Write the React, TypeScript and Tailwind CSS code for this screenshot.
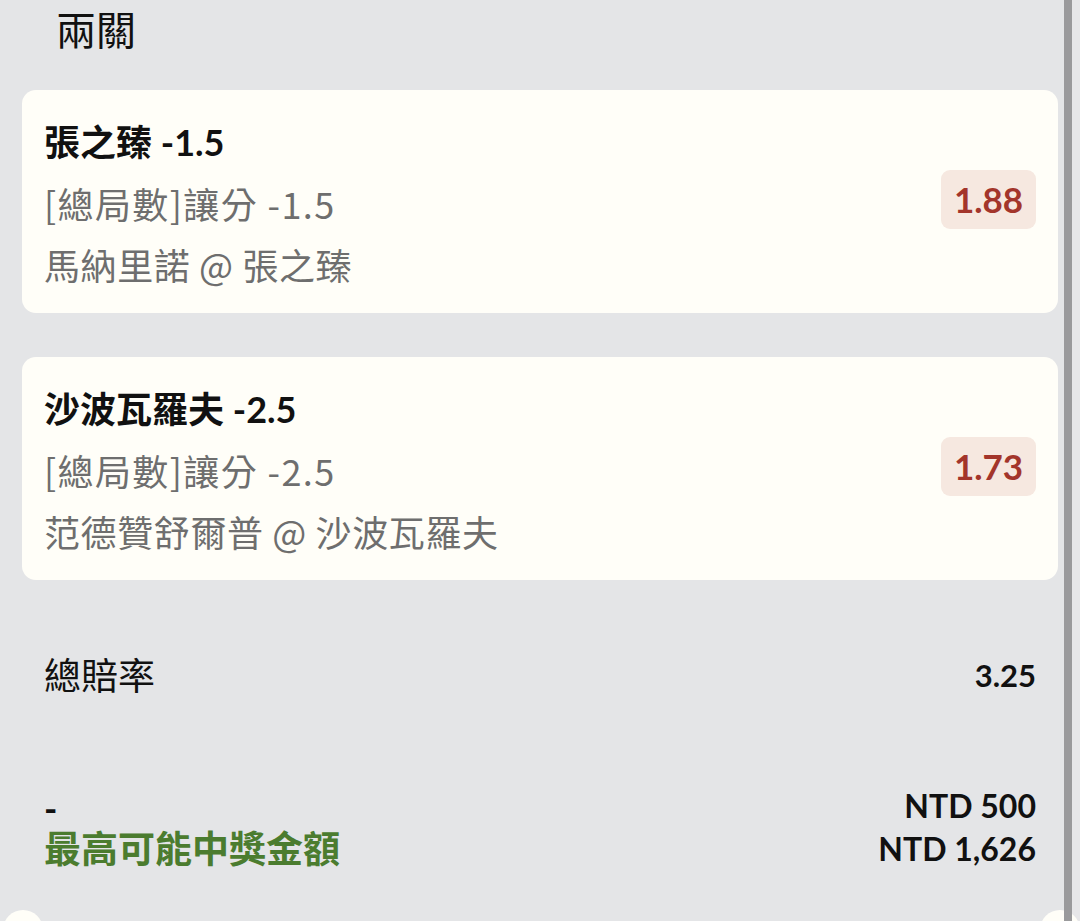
const legs = [
  {
    pick: "張之臻 -1.5",
    market: "[總局數]讓分 -1.5",
    match: "馬納里諾 @ 張之臻",
    odds: "1.88",
  },
  {
    pick: "沙波瓦羅夫 -2.5",
    market: "[總局數]讓分 -2.5",
    match: "范德贊舒爾普 @ 沙波瓦羅夫",
    odds: "1.73",
  },
];

function LegCard({ leg }: { leg: (typeof legs)[number] }) {
  return (
    <div className="flex items-center justify-between rounded-[14px] bg-[#fffef8] pl-[22px] pr-[22px] pt-[22px] pb-[18px]">
      <div className="flex flex-col">
        <div className="text-[36px] leading-[61px] font-bold text-[#111111]">
          {leg.pick}
        </div>
        <div className="text-[36px] leading-[61px] tracking-[1.4px] text-[#6e6e6e] font-['Noto_Sans_CJK_TC',sans-serif]">
          {leg.market}
        </div>
        <div className="text-[36px] leading-[61px] tracking-[0.6px] text-[#6e6e6e] font-['Noto_Sans_CJK_TC',sans-serif]">
          {leg.match}
        </div>
      </div>
      <div className="mb-[8px] flex h-[59px] w-[95px] items-center justify-center rounded-[9px] bg-[#f6e8e0] text-[35px] font-bold text-[#a3352b]">
        {leg.odds}
      </div>
    </div>
  );
}

export default function App() {
  return (
    <div className="relative flex h-[921px] w-full overflow-hidden bg-[#e4e5e7] font-['Lato','Noto_Sans_CJK_TC',sans-serif]">
      <div className="flex flex-1 flex-col pl-[22px] pr-[6px]">
        {/* 標題 */}
        <div className="pl-[34px] text-[40px] leading-[56px] text-[#111111] font-['Noto_Sans_CJK_TC',sans-serif]">
          兩關
        </div>

        <div className="mt-[34px] flex flex-col gap-[44px]">
          {legs.map((leg) => (
            <LegCard key={leg.pick} leg={leg} />
          ))}
        </div>

        {/* 總賠率 */}
        <div className="mt-[70px] flex h-[50px] items-center justify-between px-[22px]">
          <span className="text-[37px] text-[#111111] font-['Noto_Sans_CJK_TC',sans-serif]">總賠率</span>
          <span className="text-[31px] font-bold text-[#111111]">3.25</span>
        </div>

        {/* 投注金額 */}
        <div className="mt-[84px] flex flex-col px-[22px]">
          <div className="flex h-[43px] items-center justify-between">
            <span className="pt-[4px] text-[36px] leading-[36px] font-bold text-[#111111]">-</span>
            <span className="text-[32px] font-bold text-[#111111]">NTD 500</span>
          </div>
          <div className="flex h-[43px] items-center justify-between">
            <span className="text-[37px] font-bold text-[#4b7c2f]">最高可能中獎金額</span>
            <span className="text-[32px] font-bold text-[#111111]">NTD 1,626</span>
          </div>
        </div>
      </div>

      {/* 捲軸 */}
      <div className="w-[8px] bg-[#9a9a9c]" />
      <div className="w-[8px] bg-[#e7e7e9]" />

      {/* 票券缺口 */}
      <div className="absolute left-[3px] top-[910px] h-[40px] w-[40px] rounded-full bg-[#fffef8]" />
      <div className="absolute left-[1040px] top-[910px] h-[40px] w-[40px] rounded-full bg-[#fffef8]" />
      <div className="absolute left-[1064px] top-0 h-full w-[8px] bg-[#9a9a9c]" />
    </div>
  );
}
